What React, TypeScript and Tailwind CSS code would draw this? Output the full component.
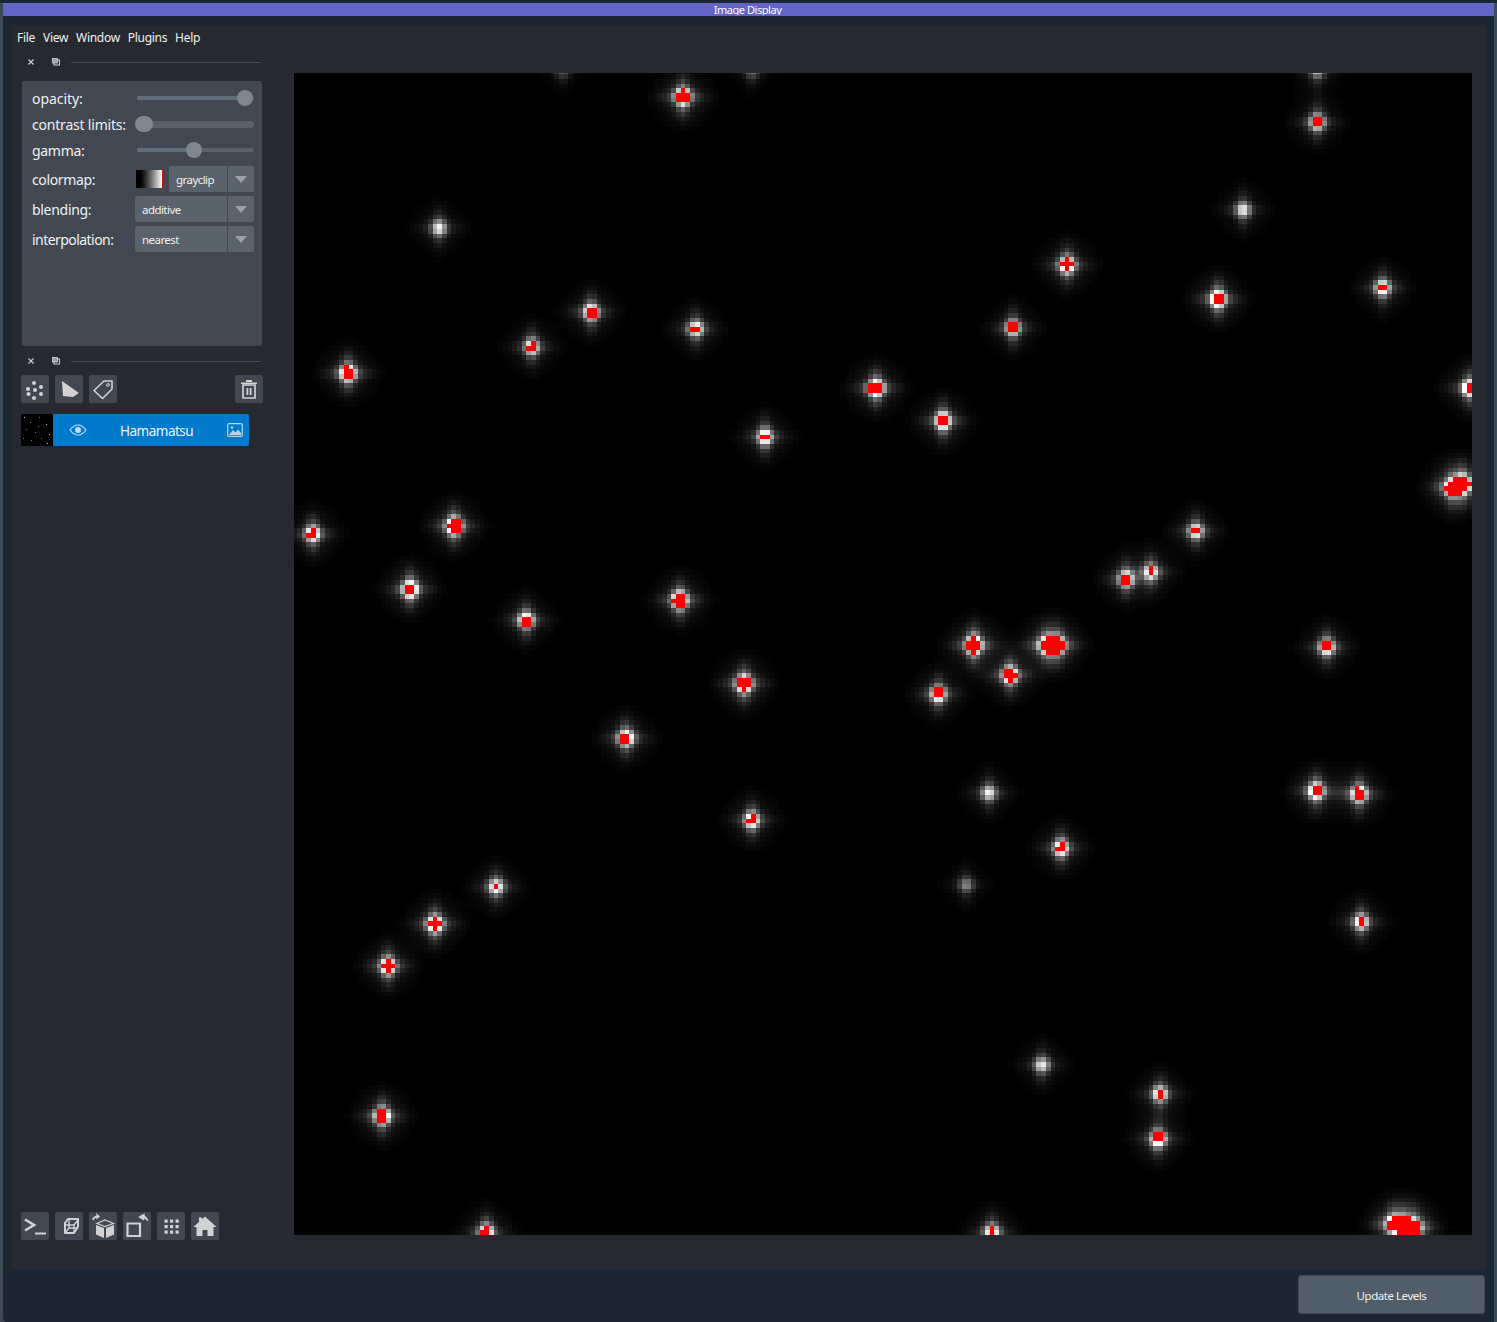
import React, { useMemo } from "react";

const PX = 4.68;
const W = 253;
const H = 250;

// x, y (screen centre), amplitude
const SPOTS: [number, number, number][] = [
  [683, 97, 1.85], [1317, 122, 1.2], [563, 70, 0.4], [752, 70, 0.5], [1317, 70, 0.85],
  [439, 228, 1.0], [1243, 210, 1.0], [1067, 265, 1.6], [1218, 299, 1.8], [1383, 288, 1.25],
  [591, 312, 1.4], [696, 329, 1.15], [1013, 328, 1.2], [532, 347, 1.15], [348, 373, 1.7],
  [876, 388, 1.85], [1470, 388, 1.6], [943, 421, 1.7], [765, 437, 1.3],
  [1452, 488, 1.5], [1462, 484, 2.2],
  [313, 534, 1.35], [454, 526, 1.85], [1196, 531, 1.15], [1151, 572, 1.15], [1126, 579, 1.3],
  [410, 589, 1.8], [526, 620, 1.4], [680, 600, 1.85],
  [974, 645, 2.2], [1047, 645, 1.7], [1057, 645, 1.7],
  [1327, 647, 1.35], [1010, 675, 1.7], [938, 694, 1.35], [744, 684, 1.9], [626, 738, 1.55],
  [989, 793, 1.0], [1316, 791, 1.65], [1359, 794, 1.65], [752, 820, 1.35], [1061, 848, 1.35],
  [496, 887, 1.15], [966, 885, 0.55], [1361, 922, 1.2], [435, 924, 1.7], [388, 966, 1.6],
  [1042, 1065, 0.95], [1160, 1094, 1.15], [1158, 1139, 1.4], [382, 1116, 1.7],
  [486, 1232, 1.3], [992, 1232, 1.2],
  [1394, 1224, 1.6], [1404, 1226, 1.8], [1414, 1228, 1.5],
];

function Microscope() {
  const cells = useMemo(() => {
    const f = new Float32Array(W * H);
    for (const [sx, sy, a] of SPOTS) {
      const amp = a > 1.05 ? a * 1.12 : a;
      const cx = (sx - 294) / PX - 0.15;
      const cy = (sy - 73) / PX + 0.2;
      for (let j = Math.max(0, Math.floor(cy - 14)); j < Math.min(H, cy + 14); j++) {
        for (let i = Math.max(0, Math.floor(cx - 14)); i < Math.min(W, cx + 14); i++) {
          const dx = i - cx;
          const dy = j - cy;
          const r2 = dx * dx + dy * dy;
          const core = Math.exp(-r2 / 2.3);
          const armV = Math.exp(-(dy * dy) / 12 - (dx * dx) / 1.6);
          const armH = Math.exp(-(dx * dx) / 18 - (dy * dy) / 1.4);
          const halo = Math.exp(-r2 / 20);
          f[j * W + i] += amp * (core * 0.63 + armV * 0.2 + armH * 0.1 + halo * 0.07);
        }
      }
    }
    const out: { x: number; y: number; c: string }[] = [];
    for (let j = 0; j < H; j++) {
      for (let i = 0; i < W; i++) {
        const v = f[j * W + i];
        if (v < 0.012) continue;
        if (v >= 1) out.push({ x: i, y: j, c: "#ff0000" });
        else {
          const g = Math.round(255 * v);
          out.push({ x: i, y: j, c: `rgb(${g},${g},${g})` });
        }
      }
    }
    return out;
  }, []);
  return (
    <svg width={1178} height={1162} viewBox={`0 0 ${1178 / PX} ${1162 / PX}`} shapeRendering="crispEdges" className="block bg-black">
      {cells.map((r, k) => (
        <rect key={k} x={r.x - 0.35} y={r.y - 0.7} width={1.02} height={1.02} fill={r.c} />
      ))}
    </svg>
  );
}

const ink = "#d1d2d4";

function SlideRow({ label, pct, thick, track }: { label: string; pct: number; thick?: boolean; track: string }) {
  return (
    <div className="flex h-[26px] items-center">
      <span className={`w-[115px] shrink-0 pl-[10px] text-[14px] whitespace-nowrap text-[#f0f1f2] ${track}`}>{label}</span>
      <div className={`relative w-[117px] rounded-full bg-[#5a616a] ${thick ? "h-[7px]" : "h-[4px]"}`}>
        <div className="absolute top-0 left-0 h-full rounded-full bg-[#5f6e78]" style={{ width: `${pct}%` }} />
        <div
          className={`absolute top-1/2 h-[16px] -translate-x-1/2 -translate-y-1/2 rounded-full bg-[#7e8790] ${thick ? "w-[18px]" : "w-[16px]"}`}
          style={{ left: `${pct}%` }}
        />
      </div>
    </div>
  );
}

function Combo({ value, w }: { value: string; w: string }) {
  return (
    <div className={`flex h-[26px] shrink-0 rounded-[2px] bg-[#5a626c] ${w}`}>
      <span className="flex-1 pl-[7px] text-[11.5px] leading-[27px] tracking-[-0.55px] text-[#f0f1f2]">{value}</span>
      <span className="flex w-[27px] items-center justify-center border-l border-[#414851]">
        <span className="h-0 w-0 border-x-[6px] border-t-[7px] border-x-transparent border-t-[#9ca1a8]" />
      </span>
    </div>
  );
}

function ComboRow({ label, track, children }: { label: string; track: string; children: React.ReactNode }) {
  return (
    <div className="flex h-[30px] items-center">
      <span className={`w-[113px] shrink-0 pl-[10px] text-[14px] text-[#f0f1f2] ${track}`}>{label}</span>
      {children}
    </div>
  );
}

function Handle() {
  return (
    <div className="flex h-[12px] items-center pl-[9px]">
      <svg width="20" height="12" viewBox="0 0 20 12" className="shrink-0">
        <path d="M7.500 3.500l5 5M12.500 3.500l-5 5" stroke={ink} strokeWidth="1.100" />
      </svg>
      <svg width="10" height="10" viewBox="0 0 10 10" className="ml-[10px] shrink-0">
        <rect x="3" y="3" width="5.500" height="5" fill="none" stroke={ink} strokeWidth="1" />
        <rect x="1.500" y="1.500" width="5" height="4.500" fill="#9da0a5" stroke={ink} strokeWidth="0.800" />
      </svg>
      <div className="ml-[10px] h-px w-[190px] bg-[#414851]" />
    </div>
  );
}

function Btn({ children, className = "" }: { children: React.ReactNode; className?: string }) {
  return (
    <div className={`flex h-[28px] w-[28px] shrink-0 items-center justify-center rounded-[2px] bg-[#414851] ${className}`}>
      <svg width="28" height="28" viewBox="0 0 28 28" fill={ink}>{children}</svg>
    </div>
  );
}

export default function App() {
  return (
    <div className="relative h-[1322px] w-[1497px] overflow-hidden bg-[#3b4a55] font-['Noto_Sans',sans-serif]">
      <div className="h-[3px] bg-[#1b2631]" />
      <div className="mr-[3px] ml-[3px] flex h-[1319px] flex-col rounded-bl-[4px] bg-[#1b2631]">
        <div className="h-[13px] bg-[#6464c8] pr-[2px] text-center text-[11px] leading-[13px] tracking-[-0.45px] text-white">
          <div className="h-[12px] overflow-hidden">Image Display</div>
        </div>
        <div className="mt-[9px] mr-[8px] ml-[9px] flex h-[1244px] rounded-[2px] bg-[#262930]">
          <div className="flex w-[282px] shrink-0 flex-col">
            <div className="flex h-[23px] items-center gap-[8px] pt-[2px] pl-[5px] text-[12px] tracking-[-0.3px] text-[#f0f1f2]">
              <span>File</span><span>View</span><span>Window</span><span>Plugins</span><span>Help</span>
            </div>
            <div className="mt-[8px]"><Handle /></div>
            <div className="mt-[13px] ml-[10px] h-[265px] w-[240px] rounded-[2px] bg-[#414851] pt-[4px]">
              <SlideRow label="opacity:" pct={92} track="tracking-[-0.05px]" />
              <SlideRow label="contrast limits:" pct={6} thick track="tracking-[-0.2px]" />
              <SlideRow label="gamma:" pct={49} track="tracking-[-0.3px]" />
              <div className="h-[1px]" />
              <ComboRow label="colormap:" track="tracking-[-0.35px]">
                <div className="mr-[6px] ml-[1px] h-[18px] w-[27px] shrink-0 border-r border-[#d01010] bg-gradient-to-r from-black from-[10%] to-white" />
                <Combo value="grayclip" w="w-[85px]" />
              </ComboRow>
              <ComboRow label="blending:" track="tracking-[-0.3px]"><Combo value="additive" w="w-[119px]" /></ComboRow>
              <ComboRow label="interpolation:" track="tracking-[-0.55px]"><Combo value="nearest" w="w-[119px]" /></ComboRow>
            </div>
            <div className="mt-[9px]"><Handle /></div>
            <div className="mt-[8px] ml-[9px] flex w-[242px] gap-[6px]">
              <Btn>
                {[[7,14],[13,8],[20,12],[7.500,19],[14,15],[20,19],[13,23]].map(([x,y],i)=>(<circle key={i} cx={x} cy={y} r="2" />))}
              </Btn>
              <Btn><path d="M7 6 L24 18 L18 22 L8 21 Z" /></Btn>
              <Btn>
                <path d="M5 15.500 L15 6 H23 V14 L13.500 23.500 Z" fill="none" stroke={ink} strokeWidth="1.600" strokeLinejoin="round" />
                <circle cx="19" cy="10" r="1.400" fill="none" stroke={ink} />
              </Btn>
              <Btn className="ml-auto">
                <path d="M6 7.500h16v1.600H6zM11 5h6v2h-6z" />
                <path d="M8 10h12v13H8z" fill="none" stroke={ink} strokeWidth="1.700" />
                <path d="M11.500 13h1.800v7h-1.800zM14.700 13h1.800v7h-1.800z" />
              </Btn>
            </div>
            <div className="mt-[11px] ml-[9px] flex h-[32px] w-[228px] rounded-[2px] bg-[#007acc]">
              <svg width="32" height="32" viewBox="0 0 32 32" className="shrink-0 bg-black">
                {[[3,3],[9,8],[18,3],[25,10],[5,15],[14,18],[28,20],[10,26],[20,24],[26,29],[2,24],[17,12]].map(([x,y],i)=>(<rect key={i} x={x} y={y} width="1" height="1" fill={i%3===0?"#bbb":"#777"} />))}
              </svg>
              <svg width="18" height="12" viewBox="0 0 18 12" className="mt-[10px] ml-[16px] shrink-0">
                <path d="M1 6C4 2 6.500 1 9 1s5 1 8 5c-3 4-5.500 5-8 5S4 10 1 6Z" fill="none" stroke="#c3dcee" strokeWidth="1.200" />
                <circle cx="9" cy="6" r="3" fill="#c3dcee" />
              </svg>
              <span className="ml-[33px] w-[74px] text-[13.500px] leading-[35px] tracking-[-0.5px] whitespace-nowrap text-[#f0f1f2]">Hamamatsu</span>
              <svg width="16" height="14" viewBox="0 0 16 14" className="mt-[9px] ml-[33px] shrink-0">
                <rect x="0.700" y="0.700" width="14.600" height="12.600" rx="1" fill="none" stroke="#b5d5ec" strokeWidth="1.200" />
                <path d="M2 12 L6 7 L8.500 9.500 L11 6.500 L14 10 V12 Z" fill="#b5d5ec" />
                <circle cx="5" cy="4.500" r="1.300" fill="#b5d5ec" />
              </svg>
            </div>
            <div className="mt-auto mb-[29px] ml-[9px] flex gap-[6px]">
              <Btn>
                <path d="M4 7.500 L13 13 L4 18.500" fill="none" stroke={ink} strokeWidth="2.600" />
                <path d="M14 20.500h11v2H14z" />
              </Btn>
              <Btn>
                <path d="M10 11 L13 7 H23 V15 L19 21 H10 Z" fill="none" stroke={ink} strokeWidth="2" strokeLinejoin="round" />
                <path d="M10 13 H19 V21 M19 13 L23 8 M14 8 V16 H23 M10 21 L14 16" fill="none" stroke={ink} strokeWidth="1.400" />
              </Btn>
              <Btn>
                <path d="M16 8 L24.500 11.500 L16 14.500 L8 11.500 Z" fill="none" stroke={ink} strokeWidth="1.200" />
                <path d="M7 13 L15 16 V26 L7 22.500 Z M17 16 L25 13 V22.500 L17 26 Z" />
                <path d="M3 7 C4 5 6 4 7.500 3.500 L7 1 L11 4.500 L7.500 7.500 L7.500 5.500 C6 6 5 7 4.500 8.500 Z" />
              </Btn>
              <Btn>
                <path d="M4.500 11.500h12.500v12.500H4.500z" fill="none" stroke={ink} strokeWidth="2.200" />
                <path d="M15 5 L21.500 1.500 L22 4 C24 5 25 7 25.500 9 L23.500 8.500 C23 7.500 22 6.500 21.500 6.500 L21 8.500 Z" />
              </Btn>
              <Btn>
                {[7.500,13,18.500].map((y)=>[7.500,13,18.500].map((x)=>(<rect key={`${x}-${y}`} x={x} y={y} width="3.200" height="3.200" />)))}
              </Btn>
              <Btn>
                <path d="M14 4.500 L25.500 15 H22.500 V24 H16.500 V18 H11.500 V24 H5.500 V15 H2.500 L8 10 V5.500 H11 V7.300 Z" />
              </Btn>
            </div>
          </div>
          <div className="mt-[48px]"><Microscope /></div>
        </div>
        <div className="mt-[6px] mr-[9px] flex justify-end">
          <div className="flex h-[39px] w-[187px] items-center justify-center rounded-[3px] border border-[#414851] bg-[#515e69] pt-[2px] text-[11.500px] tracking-[-0.45px] text-[#f0f1f2]">Update Levels</div>
        </div>
      </div>
    </div>
  );
}
